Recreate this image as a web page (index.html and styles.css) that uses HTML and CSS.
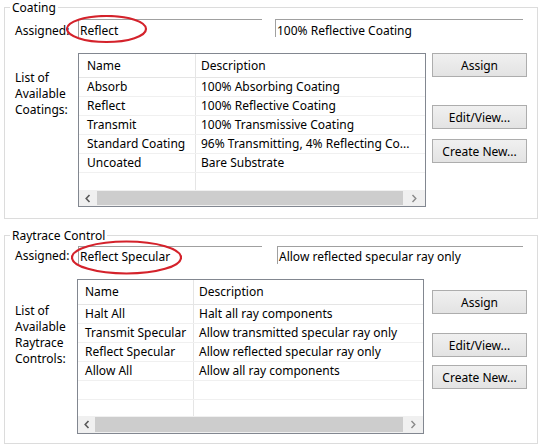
FILE: index.html
```html
<!DOCTYPE html>
<html>
<head>
<meta charset="utf-8">
<link rel="stylesheet" href="styles.css">
</head>
<body>
<fieldset class="group group--coating">
  <legend class="group__title">Coating</legend>
  <div class="assigned">
    <div class="assigned__label">Assigned:</div>
    <div class="field field--name">Reflect<svg class="mark mark--coating" width="82" height="29" viewBox="0 0 82 29"><ellipse cx="40.5" cy="14" rx="39.5" ry="13" fill="none" stroke="#d4222b" stroke-width="2.2"/></svg></div>
    <div class="field field--desc">100% Reflective Coating</div>
  </div>
  <div class="picker">
    <div class="picker__label">List of<br>Available<br>Coatings:</div>
    <div class="list">
      <div class="list__head"><div class="c1">Name</div><div class="c2">Description</div></div>
      <div class="row"><div class="c1">Absorb</div><div class="c2">100% Absorbing Coating</div></div>
      <div class="row"><div class="c1">Reflect</div><div class="c2">100% Reflective Coating</div></div>
      <div class="row"><div class="c1">Transmit</div><div class="c2">100% Transmissive Coating</div></div>
      <div class="row"><div class="c1">Standard Coating</div><div class="c2">96% Transmitting, 4% Reflecting Co...</div></div>
      <div class="row"><div class="c1">Uncoated</div><div class="c2">Bare Substrate</div></div>
      <div class="filler"><div class="c1"></div><div class="c2"></div></div>
      <div class="scroll">
        <div class="scroll__arrow scroll__arrow--left"><svg width="6" height="9" viewBox="0 0 6 9"><polyline points="4.5,1 1.2,4.5 4.5,8" fill="none" stroke="#5a5a5a" stroke-width="1.6"/></svg></div>
        <div class="scroll__thumb"></div>
        <div class="scroll__arrow scroll__arrow--right"><svg width="6" height="9" viewBox="0 0 6 9"><polyline points="1.5,1 4.8,4.5 1.5,8" fill="none" stroke="#8a8a8a" stroke-width="1.4"/></svg></div>
      </div>
    </div>
    <div class="actions">
      <button class="btn btn--assign">Assign</button>
      <button class="btn btn--edit">Edit/View...</button>
      <button class="btn btn--create">Create New...</button>
    </div>
  </div>
</fieldset>

<fieldset class="group group--ray">
  <legend class="group__title">Raytrace Control</legend>
  <div class="assigned">
    <div class="assigned__label">Assigned:</div>
    <div class="field field--name">Reflect Specular<svg class="mark mark--ray" width="111" height="35" viewBox="0 0 111 35"><ellipse cx="55.5" cy="17.5" rx="54.5" ry="16" fill="none" stroke="#d4222b" stroke-width="2.2"/></svg></div>
    <div class="field field--desc">Allow reflected specular ray only</div>
  </div>
  <div class="picker">
    <div class="picker__label">List of<br>Available<br>Raytrace<br>Controls:</div>
    <div class="list">
      <div class="list__head"><div class="c1">Name</div><div class="c2">Description</div></div>
      <div class="row"><div class="c1">Halt All</div><div class="c2">Halt all ray components</div></div>
      <div class="row"><div class="c1">Transmit Specular</div><div class="c2">Allow transmitted specular ray only</div></div>
      <div class="row"><div class="c1">Reflect Specular</div><div class="c2">Allow reflected specular ray only</div></div>
      <div class="row"><div class="c1">Allow All</div><div class="c2">Allow all ray components</div></div>
      <div class="row"><div class="c1"></div><div class="c2"></div></div>
      <div class="filler"><div class="c1"></div><div class="c2"></div></div>
      <div class="scroll">
        <div class="scroll__arrow scroll__arrow--left"><svg width="6" height="9" viewBox="0 0 6 9"><polyline points="4.5,1 1.2,4.5 4.5,8" fill="none" stroke="#5a5a5a" stroke-width="1.6"/></svg></div>
        <div class="scroll__thumb"></div>
        <div class="scroll__arrow scroll__arrow--right"><svg width="6" height="9" viewBox="0 0 6 9"><polyline points="1.5,1 4.8,4.5 1.5,8" fill="none" stroke="#8a8a8a" stroke-width="1.4"/></svg></div>
      </div>
    </div>
    <div class="actions">
      <button class="btn btn--assign">Assign</button>
      <button class="btn btn--edit">Edit/View...</button>
      <button class="btn btn--create">Create New...</button>
    </div>
  </div>
</fieldset>
</body>
</html>
```
FILE: styles.css
```css
* { box-sizing: border-box; }

body {
  margin: 0;
  background: #fff;
  color: #000;
  font-family: "Noto Sans", "Open Sans", sans-serif;
  font-size: 12px;
  line-height: 15px;
}

.group {
  margin: 0 0 0 4px;
  padding: 0 0 11px 0;
  width: 534px;
  min-width: 0;
  border: 1px solid #dcdcdc;
}

.group--ray {
  margin-top: 9px;
  padding-bottom: 9px;
}

.group__title {
  margin-left: 5px;
  padding: 0 2px;
  line-height: 15px;
}

/* Assigned row */
.assigned {
  display: flex;
  margin-top: 4px;
}
.group--ray .assigned { margin-top: 3px; }

.assigned__label {
  width: 73px;
  padding: 4px 0 0 10px;
  white-space: nowrap;
}
.group--ray .assigned__label { padding-top: 2px; }

.field {
  position: relative;
  height: 18px;
  border-top: 1px solid #a0a0a0;
  border-left: 1px solid #a0a0a0;
  padding: 3px 0 0 1px;
  white-space: nowrap;
}
.group--ray .field { padding-top: 2px; }

.field--name { width: 184px; }
.field--desc { width: 248px; margin-left: 13px; }
.group--ray .field--desc { margin-left: 15px; width: 246px; }

.mark {
  position: absolute;
  pointer-events: none;
}
.mark--coating { left: -13px; top: -5px; }
.mark--ray { left: -8px; top: -7px; }

/* list + buttons */
.picker {
  display: flex;
  align-items: flex-start;
  margin-top: 15px;
}

.picker__label {
  width: 73px;
  padding: 17px 0 0 10px;
  line-height: 16px;
  white-space: nowrap;
}
.group--ray .picker__label { padding-top: 24px; }

.list {
  width: 348px;
  border: 1px solid #828790;
  background: #fff;
}
.group--ray .list {
  width: 347px;
  margin-left: -1px;
}

.list__head,
.row,
.filler {
  display: flex;
}

.list__head {
  height: 24px;
  line-height: 23px;
  border-bottom: 1px solid #e5e5e5;
}
.group--ray .list__head {
  height: 25px;
  line-height: 24px;
}

.row {
  height: 19px;
  line-height: 18px;
  border-bottom: 1px solid #f0f0f0;
}

.filler { height: 17px; }
.group--ray .filler { height: 16px; }

.c1 {
  width: 117px;
  flex: none;
  padding-left: 8px;
  border-right: 1px solid #e5e5e5;
  white-space: nowrap;
  overflow: hidden;
}
.group--ray .c1 {
  width: 116px;
  padding-left: 7px;
}

.c2 {
  flex: 1;
  padding-left: 5px;
  white-space: nowrap;
  overflow: hidden;
}

.scroll {
  display: flex;
  height: 16px;
  background: #f0f0f0;
}
.group--ray .scroll { height: 17px; }

.scroll__arrow {
  display: flex;
  align-items: center;
  justify-content: center;
  flex: none;
}
.scroll__arrow--left { width: 18px; }
.scroll__arrow--right { width: 22px; }
.group--ray .scroll__arrow--left { width: 17px; }
.group--ray .scroll__arrow--right { width: 20px; }

.scroll__thumb {
  flex: 1;
  margin: 1px 0;
  background: #cdcdcd;
}

.actions {
  display: flex;
  flex-direction: column;
  margin-left: 6px;
}
.group--ray .actions { margin-left: 8px; }

.btn {
  width: 95px;
  height: 24px;
  padding: 0;
  border: 1px solid #adadad;
  border-radius: 0;
  background: linear-gradient(#f0f0f0, #e3e3e3);
  color: #000;
  font: inherit;
  line-height: 21px;
  text-align: center;
}

.btn--edit { margin-top: 28px; }
.btn--create { margin-top: 10px; }

.group--ray .btn--assign { margin-top: 11px; }
.group--ray .btn--edit { margin-top: 19px; }
.group--ray .btn--create { margin-top: 8px; }
```
